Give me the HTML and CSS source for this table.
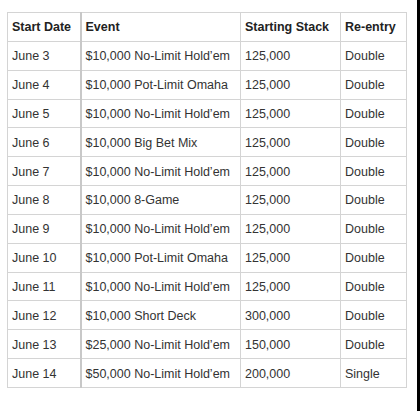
FILE: index.html
```html
<!DOCTYPE html>
<html>
<head>
<meta charset="utf-8">
<link rel="stylesheet" href="styles.css">
</head>
<body>
<div class="frame">
  <div class="content">
    <table class="schedule">
      <thead>
        <tr><th class="c1">Start Date</th><th class="c2">Event</th><th class="c3">Starting Stack</th><th class="c4">Re-entry</th></tr>
      </thead>
      <tbody>
        <tr><td class="c1">June 3</td><td class="c2">$10,000 No-Limit Hold’em</td><td>125,000</td><td>Double</td></tr>
        <tr><td class="c1">June 4</td><td class="c2">$10,000 Pot-Limit Omaha</td><td>125,000</td><td>Double</td></tr>
        <tr><td class="c1">June 5</td><td class="c2">$10,000 No-Limit Hold’em</td><td>125,000</td><td>Double</td></tr>
        <tr><td class="c1">June 6</td><td class="c2">$10,000 Big Bet Mix</td><td>125,000</td><td>Double</td></tr>
        <tr><td class="c1">June 7</td><td class="c2">$10,000 No-Limit Hold’em</td><td>125,000</td><td>Double</td></tr>
        <tr><td class="c1">June 8</td><td class="c2">$10,000 8-Game</td><td>125,000</td><td>Double</td></tr>
        <tr><td class="c1">June 9</td><td class="c2">$10,000 No-Limit Hold’em</td><td>125,000</td><td>Double</td></tr>
        <tr><td class="c1">June 10</td><td class="c2">$10,000 Pot-Limit Omaha</td><td>125,000</td><td>Double</td></tr>
        <tr><td class="c1">June 11</td><td class="c2">$10,000 No-Limit Hold’em</td><td>125,000</td><td>Double</td></tr>
        <tr><td class="c1">June 12</td><td class="c2">$10,000 Short Deck</td><td>300,000</td><td>Double</td></tr>
        <tr><td class="c1">June 13</td><td class="c2">$25,000 No-Limit Hold’em</td><td>150,000</td><td>Double</td></tr>
        <tr><td class="c1">June 14</td><td class="c2">$50,000 No-Limit Hold’em</td><td>200,000</td><td>Single</td></tr>
      </tbody>
    </table>
  </div>
  <div class="edge"></div>
</div>
</body>
</html>
```
FILE: styles.css
```css
html, body {
  margin: 0;
  padding: 0;
  background: #fff;
}
.frame {
  display: flex;
  height: 411px;
  width: 420px;
}
.content {
  flex: 1;
  padding: 12px 0 0 7px;
}
.edge {
  width: 3px;
  background: #000;
}
.schedule {
  border-collapse: collapse;
  font-family: "Liberation Sans", Arial, sans-serif;
  font-size: 12.5px;
  color: #333;
  table-layout: fixed;
  width: 399px;
}
.schedule th,
.schedule td {
  border: 1px solid #d4d4d4;
  height: 28.85px;
  padding: 1px 3px 0 4px;
  text-align: left;
  vertical-align: middle;
  box-sizing: border-box;
  white-space: nowrap;
}
.schedule th {
  font-weight: bold;
  font-size: 12.5px;
  color: #222;
}
.schedule .c1 {
  width: 73px;
  border-right: 2px solid #c8c8c8;
}
.schedule .c2 { width: 160px; }
.schedule .c3 { width: 100px; }
.schedule .c4 { width: 66px; }
```
